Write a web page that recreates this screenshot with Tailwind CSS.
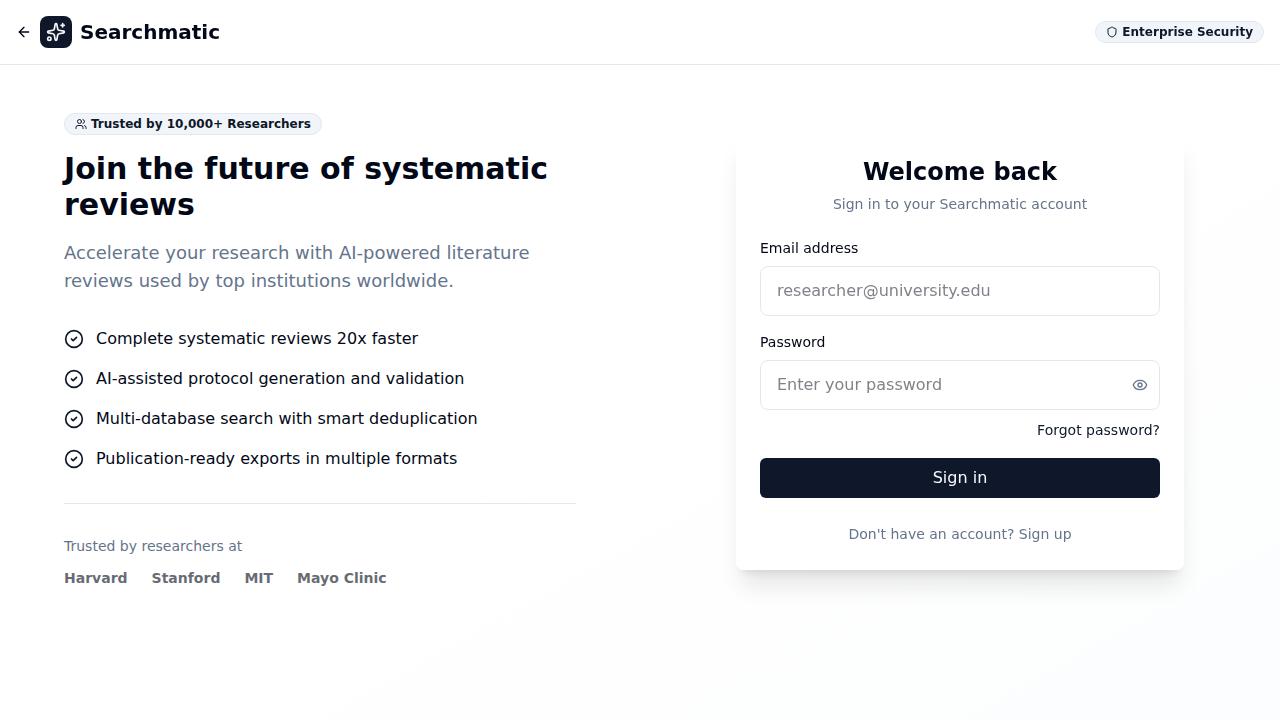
<!DOCTYPE html>
<html lang="en">
<head>
<meta charset="utf-8">
<meta name="viewport" content="width=device-width, initial-scale=1">
<title>Searchmatic – Sign in</title>
<script src="https://cdn.jsdelivr.net/npm/@tailwindcss/browser@4"></script>
</head>
<body class="flex min-h-screen flex-col bg-linear-to-br from-white via-white to-[#fcfdfe] font-['DejaVu_Sans',sans-serif] text-[#020817]">
<header class="flex h-[65px] items-center justify-between border-b border-[#e2e8f0] bg-white/95 px-4 backdrop-blur-sm">
  <div class="flex items-center gap-2">
    <a href="#" aria-label="Back">
      <svg class="size-4" viewBox="0 0 24 24" fill="none" stroke="currentColor" stroke-width="2" stroke-linecap="round" stroke-linejoin="round"><path d="m12 19-7-7 7-7"/><path d="M19 12H5"/></svg>
    </a>
    <div class="flex size-8 items-center justify-center rounded-lg bg-[#0f172a] text-[#f8fafc]">
      <svg class="size-5" viewBox="0 0 24 24" fill="none" stroke="currentColor" stroke-width="2" stroke-linecap="round" stroke-linejoin="round"><path d="M11.017 2.814a1 1 0 0 1 1.966 0l1.051 5.558a2 2 0 0 0 1.594 1.594l5.558 1.051a1 1 0 0 1 0 1.966l-5.558 1.051a2 2 0 0 0-1.594 1.594l-1.051 5.558a1 1 0 0 1-1.966 0l-1.051-5.558a2 2 0 0 0-1.594-1.594l-5.558-1.051a1 1 0 0 1 0-1.966l5.558-1.051a2 2 0 0 0 1.594-1.594z"/><path d="M20 2v4"/><path d="M22 4h-4"/><circle cx="4" cy="20" r="2"/></svg>
    </div>
    <span class="text-xl font-bold">Searchmatic</span>
  </div>
  <div class="flex items-center gap-1 rounded-full border border-[#e2e8f0] bg-[#f1f5f9] px-2.5 py-0.5 text-xs font-semibold text-[#0f172a]">
    <svg class="size-3" viewBox="0 0 24 24" fill="none" stroke="currentColor" stroke-width="2" stroke-linecap="round" stroke-linejoin="round"><path d="M20 13c0 5-3.500 7.500-7.660 8.950a1 1 0 0 1-.67-.01C7.500 20.500 4 18 4 13V6a1 1 0 0 1 1-1c2 0 4.500-1.200 6.240-2.720a1.170 1.170 0 0 1 1.520 0C14.510 3.810 17 5 19 5a1 1 0 0 1 1 1z"/></svg>
    Enterprise Security
  </div>
</header>
<main class="grid flex-1 items-start lg:grid-cols-2">
  <section class="flex flex-col items-start px-6 py-12 lg:px-16">
    <div class="flex items-center gap-1 rounded-full border border-[#e2e8f0] bg-[#f1f5f9] px-2.5 py-0.5 text-xs font-semibold text-[#0f172a]">
      <svg class="size-3" viewBox="0 0 24 24" fill="none" stroke="currentColor" stroke-width="2" stroke-linecap="round" stroke-linejoin="round"><path d="M16 21v-2a4 4 0 0 0-4-4H6a4 4 0 0 0-4 4v2"/><circle cx="9" cy="7" r="4"/><path d="M22 21v-2a4 4 0 0 0-3-3.870"/><path d="M16 3.130a4 4 0 0 1 0 7.750"/></svg>
      Trusted by 10,000+ Researchers
    </div>
    <h1 class="mt-4 text-3xl font-bold">Join the future of systematic reviews</h1>
    <p class="mt-4 text-lg leading-7 text-[#64748b]">Accelerate your research with AI-powered literature reviews used by top institutions worldwide.</p>
    <ul class="mt-8 space-y-4">
      <li class="flex items-center gap-3"><svg class="size-5 text-[#0f172a]" viewBox="0 0 24 24" fill="none" stroke="currentColor" stroke-width="2" stroke-linecap="round" stroke-linejoin="round"><circle cx="12" cy="12" r="10"/><path d="m9 12 2 2 4-4"/></svg>Complete systematic reviews 20x faster</li>
      <li class="flex items-center gap-3"><svg class="size-5 text-[#0f172a]" viewBox="0 0 24 24" fill="none" stroke="currentColor" stroke-width="2" stroke-linecap="round" stroke-linejoin="round"><circle cx="12" cy="12" r="10"/><path d="m9 12 2 2 4-4"/></svg>AI-assisted protocol generation and validation</li>
      <li class="flex items-center gap-3"><svg class="size-5 text-[#0f172a]" viewBox="0 0 24 24" fill="none" stroke="currentColor" stroke-width="2" stroke-linecap="round" stroke-linejoin="round"><circle cx="12" cy="12" r="10"/><path d="m9 12 2 2 4-4"/></svg>Multi-database search with smart deduplication</li>
      <li class="flex items-center gap-3"><svg class="size-5 text-[#0f172a]" viewBox="0 0 24 24" fill="none" stroke="currentColor" stroke-width="2" stroke-linecap="round" stroke-linejoin="round"><circle cx="12" cy="12" r="10"/><path d="m9 12 2 2 4-4"/></svg>Publication-ready exports in multiple formats</li>
    </ul>
    <div class="mt-8 w-full border-t border-[#e2e8f0] pt-8 text-sm">
      <p class="text-[#64748b]">Trusted by researchers at</p>
      <div class="mt-3 flex flex-wrap gap-6 font-semibold opacity-60">
        <span>Harvard</span><span>Stanford</span><span>MIT</span><span>Mayo Clinic</span>
      </div>
    </div>
  </section>
  <section class="flex justify-center self-start px-6 pt-[67px] pb-12">
    <div class="w-full max-w-md rounded-lg bg-white/95 px-6 pt-6 pb-[26px] shadow-xl backdrop-blur-sm">
      <h2 class="text-center text-2xl font-bold">Welcome back</h2>
      <p class="mt-1.5 text-center text-sm text-[#64748b]">Sign in to your Searchmatic account</p>
      <form class="mt-6 text-sm">
        <label for="email" class="block">Email address</label>
        <input id="email" type="email" placeholder="researcher@university.edu" class="mt-2 block h-[50px] w-full rounded-lg border border-[#e2e8f0] bg-white px-4 pb-0.5 text-base placeholder:text-[#808389]">
        <label for="password" class="mt-4 block">Password</label>
        <div class="relative mt-2">
          <input id="password" type="password" placeholder="Enter your password" class="block h-[50px] w-full rounded-lg border border-[#e2e8f0] bg-white pr-12 pb-0.5 pl-4 text-base placeholder:text-[#808389]">
          <button type="button" aria-label="Show password" class="absolute inset-y-0 right-3 flex items-center text-[#64748b]">
            <svg class="size-4" viewBox="0 0 24 24" fill="none" stroke="currentColor" stroke-width="2" stroke-linecap="round" stroke-linejoin="round"><path d="M2.062 12.348a1 1 0 0 1 0-.696 10.750 10.750 0 0 1 19.876 0 1 1 0 0 1 0 .696 10.750 10.750 0 0 1-19.876 0"/><circle cx="12" cy="12" r="3"/></svg>
          </button>
        </div>
        <div class="mt-2.5 flex justify-end"><a href="#" class="text-[#0f172a]">Forgot password?</a></div>
        <button type="submit" class="mt-[18px] block h-10 w-full rounded-md bg-[#0f172a] text-base text-[#f8fafc]">Sign in</button>
      </form>
      <div class="mt-[26px] flex justify-center"><a href="#" class="text-sm text-[#64748b]">Don't have an account? Sign up</a></div>
    </div>
  </section>
</main>
</body>
</html>
